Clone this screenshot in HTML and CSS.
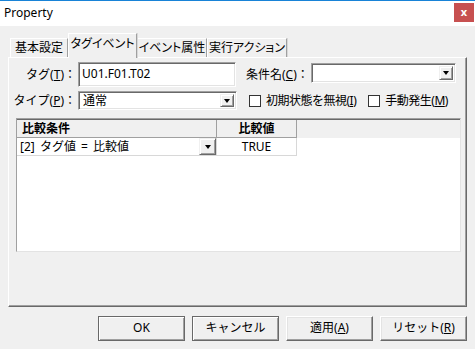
FILE: index.html
```html
<!DOCTYPE html>
<html lang="ja">
<head>
    <meta charset="UTF-8">
    <title>Property</title>
    <link rel="stylesheet" href="styles.css">
</head>
<body>
    <div class="window">
        <div class="titlebar">
            <span class="title">Property</span>
            <span class="close">x</span>
        </div>

        <div class="dialog">
            <!-- Tabs -->
            <div class="tabs">
                <div class="tab tab-basic">基本設定</div>
                <div class="tab tab-active">タグイベント</div>
                <div class="tab tab-attr">イベント属性</div>
                <div class="tab tab-action">実行アクション</div>
            </div>

            <div class="panel">
                <div class="form-row row-tag">
                    <label class="field-label">タグ(<u>T</u>)：</label>
                    <div class="textbox">U01.F01.T02</div>
                    <label class="cond-label">条件名(<u>C</u>)：</label>
                    <div class="combo cond-combo">
                        <span class="combo-text"></span>
                        <span class="drop-btn"></span>
                    </div>
                </div>

                <div class="form-row row-type">
                    <label class="field-label">タイプ(<u>P</u>)：</label>
                    <div class="combo type-combo">
                        <span class="combo-text">通常</span>
                        <span class="drop-btn"></span>
                    </div>
                    <span class="checkbox check-ignore"></span>
                    <span class="check-text">初期状態を無視(<u>I</u>)</span>
                    <span class="checkbox check-manual"></span>
                    <span class="check-text">手動発生(<u>M</u>)</span>
                </div>

                <!-- Condition grid -->
                <div class="grid">
                    <div class="grid-head">
                        <div class="cell col-cond head-cond">比較条件</div>
                        <div class="cell col-value head-value">比較値</div>
                    </div>
                    <div class="grid-row">
                        <div class="cell col-cond row-cond">
                            <span class="cond-text">[2] タグ値 = 比較値</span>
                            <span class="drop-btn cell-drop"></span>
                        </div>
                        <div class="cell col-value row-value">TRUE</div>
                    </div>
                </div>
            </div>

            <div class="buttons">
                <div class="btn btn-default">OK</div>
                <div class="btn btn-dark">キャンセル</div>
                <div class="btn">適用(<u>A</u>)</div>
                <div class="btn">リセット(<u>R</u>)</div>
            </div>
        </div>
    </div>
</body>
</html>
```

FILE: styles.css
```css
* {
    margin: 0;
    padding: 0;
    box-sizing: border-box;
}

body {
    font-family: "Noto Sans", "Noto Sans CJK JP", sans-serif;
    font-size: 12px;
    line-height: 16px;
    color: #000;
    background: #f0f0f0;
}

u {
    text-decoration: underline;
    text-underline-offset: 1px;
}

.window {
    width: 475px;
    height: 349px;
    background: #f0f0f0;
    border-top: 1px solid #1883d7;
    overflow: hidden;
}

.titlebar {
    height: 25px;
    background: #fff;
    display: flex;
    justify-content: space-between;
    align-items: flex-start;
}

.title {
    padding-left: 4px;
    margin-top: 4px;
    font-size: 12px;
}

.close {
    width: 20px;
    height: 19px;
    margin-top: 2px;
    margin-right: 1px;
    background: #c75050;
    color: #fff;
    font-weight: bold;
    font-size: 11px;
    line-height: 17px;
    text-align: center;
}

.dialog {
    padding: 7px 0 0 8px;
    width: 467px;
}

.tabs {
    display: flex;
    align-items: flex-end;
    height: 24px;
    padding-left: 2px;
}

.tab {
    height: 19px;
    border-top: 1px solid #fff;
    border-left: 1px solid #fff;
    border-right: 1px solid #a0a0a0;
    box-shadow: 1px 0 0 #d8d8d8;
    text-align: center;
    line-height: 17px;
    white-space: nowrap;
    font-feature-settings: "palt";
}

.tab-basic {
    width: 58px;
}

.tab-active {
    width: 69px;
    height: 25px;
    margin-bottom: -1px;
    padding-top: 1px;
    background: #f0f0f0;
    position: relative;
    z-index: 1;
}

.tab-attr {
    width: 70px;
}

.tab-action {
    width: 80px;
}

.panel {
    width: 459px;
    height: 250px;
    border-top: 1px solid #fff;
    border-left: 1px solid #fff;
    border-right: 1px solid #696969;
    border-bottom: 1px solid #696969;
    box-shadow: inset -1px -1px 0 #a0a0a0;
}

.form-row {
    display: flex;
    align-items: center;
}

.row-tag {
    margin-top: 4px;
    height: 25px;
}

.row-type {
    margin-top: 4px;
    height: 19px;
}

.field-label {
    width: 67px;
    text-align: right;
    white-space: nowrap;
}

.textbox,
.combo {
    background: #fff;
    border: 1px solid;
    border-color: #a0a0a0 #fff #fff #a0a0a0;
    box-shadow: inset 1px 1px 0 #696969, inset -1px -1px 0 #e3e3e3;
}

.textbox {
    width: 158px;
    height: 25px;
    margin-left: 2px;
    padding: 3px 0 0 3px;
}

.combo {
    display: flex;
    align-items: stretch;
    justify-content: space-between;
    padding: 2px;
}

.combo-text {
    padding-left: 2px;
    line-height: 14px;
}

.cond-label {
    width: 65px;
    margin-left: 10px;
    white-space: nowrap;
}

.cond-combo {
    width: 145px;
    height: 20px;
    align-self: flex-start;
    margin-top: 1px;
}

.type-combo {
    width: 159px;
    height: 19px;
    margin-left: 2px;
}

.drop-btn {
    width: 14px;
    background: #f0f0f0;
    border: 1px solid;
    border-color: #f0f0f0 #696969 #696969 #f0f0f0;
    box-shadow: inset 1px 1px 0 #fff, inset -1px -1px 0 #a0a0a0;
    display: flex;
    align-items: center;
    justify-content: center;
}

.drop-btn::after {
    content: "";
    border-top: 4px solid #000;
    border-left: 3.5px solid transparent;
    border-right: 3.5px solid transparent;
}

.checkbox {
    width: 12px;
    height: 12px;
    background: #fff;
    border: 1px solid #333;
}

.check-ignore {
    margin-left: 12px;
}

.check-manual {
    margin-left: 12px;
}

.check-text {
    margin-left: 5px;
    white-space: nowrap;
    letter-spacing: -0.5px;
}

.grid {
    margin: 8px 0 0 7px;
    width: 445px;
    height: 134px;
    background: #fff;
    border-top: 1px solid #a0a0a0;
    border-left: 1px solid #a0a0a0;
    border-right: 1px solid #e3e3e3;
    border-bottom: 1px solid #e3e3e3;
    box-shadow: inset 0 1px 0 #696969;
}

.grid-head {
    display: flex;
    height: 18px;
    margin-top: 1px;
    background: #f0f0f0;
}

.grid-row {
    display: flex;
    height: 18px;
}

.cell {
    white-space: nowrap;
}

.col-cond {
    width: 200px;
}

.col-value {
    width: 80px;
    text-align: center;
}

.head-cond,
.head-value {
    font-weight: bold;
    border-right: 1px solid #a0a0a0;
    border-bottom: 1px solid #a0a0a0;
    line-height: 17px;
}

.head-cond {
    padding-left: 5px;
}

.row-cond,
.row-value {
    border-right: 1px solid #d8d8d8;
    border-bottom: 1px solid #d8d8d8;
    line-height: 17px;
}

.row-cond {
    display: flex;
    justify-content: space-between;
    padding-left: 3px;
}

.cond-text {
    word-spacing: 2px;
}

.cell-drop {
    width: 17px;
}

.buttons {
    display: flex;
    justify-content: flex-end;
    gap: 7px;
    margin-top: 9px;
    width: 459px;
}

.btn {
    width: 87px;
    height: 25px;
    background: #f0f0f0;
    border: 1px solid;
    border-color: #fff #696969 #696969 #fff;
    box-shadow: inset -1px -1px 0 #a0a0a0, inset 1px 1px 0 #e3e3e3;
    text-align: center;
    line-height: 22px;
}

.btn-default,
.btn-dark {
    border-color: #696969;
    box-shadow: inset 1px 1px 0 #fff, inset -1px -1px 0 #a0a0a0;
}
```
